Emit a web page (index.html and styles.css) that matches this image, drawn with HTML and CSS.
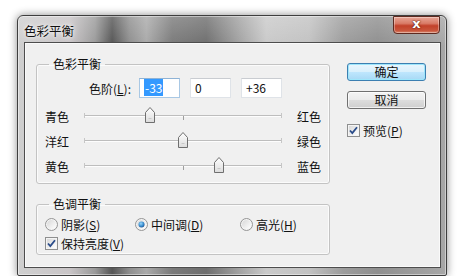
FILE: index.html
```html
<!DOCTYPE html>
<html lang="zh-CN">
<head>
<meta charset="UTF-8" />
<title>色彩平衡</title>
<link rel="stylesheet" href="styles.css">
</head>
<body>

<div class="window">
  <div class="titlebar">
    <span class="title">色彩平衡</span>
    <div class="close">x</div>
  </div>

  <div class="client">
    <div class="main">
      <fieldset class="group balance">
        <legend>色彩平衡</legend>

        <div class="level-row">
          <span class="level-label">色阶(<u>L</u>):</span>
          <div class="field focused"><span class="sel">-33</span></div>
          <div class="field">0</div>
          <div class="field">+36</div>
        </div>

        <div class="slider-row">
          <span class="side-label">青色</span>
          <div class="track">
            <span class="tick"></span>
            <svg class="thumb" style="left:33.5%" width="12" height="18" viewBox="0 0 12 18"><use href="#thumb"/></svg>
          </div>
          <span class="side-label right">红色</span>
        </div>
        <div class="slider-row">
          <span class="side-label">洋红</span>
          <div class="track">
            <span class="tick"></span>
            <svg class="thumb" style="left:50%" width="12" height="18" viewBox="0 0 12 18"><use href="#thumb"/></svg>
          </div>
          <span class="side-label right">绿色</span>
        </div>
        <div class="slider-row">
          <span class="side-label">黄色</span>
          <div class="track">
            <span class="tick"></span>
            <svg class="thumb" style="left:68%" width="12" height="18" viewBox="0 0 12 18"><use href="#thumb"/></svg>
          </div>
          <span class="side-label right">蓝色</span>
        </div>
      </fieldset>

      <fieldset class="group tone">
        <legend>色调平衡</legend>
        <div class="radio-row">
          <label class="opt shadows">
            <svg width="13" height="13" viewBox="0 0 13 13"><use href="#radio"/></svg>
            <span>阴影(<u>S</u>)</span>
          </label>
          <label class="opt midtones">
            <svg width="13" height="13" viewBox="0 0 13 13"><use href="#radio"/><circle cx="6.5" cy="6.5" r="3" fill="url(#dot)"/></svg>
            <span>中间调(<u>D</u>)</span>
          </label>
          <label class="opt">
            <svg width="13" height="13" viewBox="0 0 13 13"><use href="#radio"/></svg>
            <span>高光(<u>H</u>)</span>
          </label>
        </div>
        <label class="opt check-row">
          <svg width="13" height="13" viewBox="0 0 13 13"><use href="#check"/></svg>
          <span>保持亮度(<u>V</u>)</span>
        </label>
      </fieldset>
    </div>

    <div class="side">
      <div class="btn default">确定</div>
      <div class="btn">取消</div>
      <label class="opt preview">
        <svg width="13" height="13" viewBox="0 0 13 13"><use href="#check"/></svg>
        <span>预览(<u>P</u>)</span>
      </label>
    </div>
  </div>
</div>

<svg width="0" height="0" class="defs">
  <defs>
    <linearGradient id="thumbFill" x1="0" y1="0" x2="0" y2="1">
      <stop offset="0" stop-color="#ffffff"/>
      <stop offset="1" stop-color="#dcdcdc"/>
    </linearGradient>
    <linearGradient id="boxFill" x1="0" y1="0" x2="1" y2="1">
      <stop offset="0" stop-color="#d8d8d8"/>
      <stop offset="1" stop-color="#ffffff"/>
    </linearGradient>
    <radialGradient id="dot" cx="0.4" cy="0.35" r="0.7">
      <stop offset="0" stop-color="#9ad6fb"/>
      <stop offset="0.6" stop-color="#3a8fd0"/>
      <stop offset="1" stop-color="#1b4f8c"/>
    </radialGradient>
    <g id="thumb">
      <path d="M1.5 6.5 L6 1.5 L10.5 6.5 V16.5 H1.5 Z" fill="url(#thumbFill)" stroke="#6f6f6f"/>
      <path d="M4.5 12.5 H7.5" stroke="#c8c8c8"/>
    </g>
    <g id="radio">
      <circle cx="6.5" cy="6.5" r="6" fill="#f4f4f4" stroke="#949494"/>
      <circle cx="6.5" cy="6.5" r="4.5" fill="url(#boxFill)"/>
    </g>
    <g id="check">
      <rect x="0.5" y="0.5" width="12" height="12" fill="#f4f4f4" stroke="#8e8f8f"/>
      <rect x="2" y="2" width="9" height="9" fill="url(#boxFill)"/>
      <path d="M3 6.5 L5.3 9 L10 3.2" fill="none" stroke="#2a4c8a" stroke-width="1.8"/>
    </g>
  </defs>
</svg>

</body>
</html>
```

FILE: styles.css
```css
body {
  margin: 0;
  background: #fff;
  font-family: "Noto Sans CJK SC", "Liberation Sans", sans-serif;
  font-size: 12px;
  color: #111;
}

.defs {
  position: absolute;
}

/* Window frame */
.window {
  margin: 15px 0 0 17px;
  width: 430px;
  height: 261px;
  box-sizing: border-box;
  border: 1px solid #3e3e3e;
  border-radius: 6px 6px 2px 2px;
  padding: 0 6px 8px 7px;
  display: flex;
  flex-direction: column;
  background:
    linear-gradient(180deg, rgba(255,255,255,0.2), rgba(255,255,255,0) 30px),
    linear-gradient(90deg, #cfcfcf 0%, #c9c5c7 12%, #9a9a9a 18%, #555 22%, #8e8e8e 26%, #a9a9a9 30%, #7a7a7a 36%, #6e6e6e 44%, #a4a4a4 52%, #c9c9c9 58%, #c2c2c2 68%, #9c9c9c 76%, #8f8f8f 84%, #a7a7a7 100%);
  box-shadow: 0 0 8px rgba(0,0,0,0.45), inset 0 0 0 1px rgba(255,255,255,0.45);
}

.titlebar {
  height: 27px;
  display: flex;
  justify-content: space-between;
  align-items: flex-start;
}

.title {
  margin: 7px 0 0 -1px;
  font-size: 12.5px;
  line-height: 15px;
  color: #111;
  text-shadow: 0 0 6px rgba(255,255,255,0.9), 0 0 3px rgba(255,255,255,0.9);
}

.close {
  width: 47px;
  height: 18px;
  box-sizing: border-box;
  border: 1px solid #5e2a20;
  border-radius: 0 0 4px 4px;
  background: linear-gradient(180deg, #e8a697 0%, #d97b67 40%, #c2412a 55%, #c9563c 85%, #d98a70 100%);
  box-shadow: inset 0 0 0 1px rgba(255,255,255,0.35);
  color: #fff;
  font-family: "DejaVu Sans", sans-serif;
  font-weight: bold;
  font-size: 13px;
  line-height: 14px;
  text-align: center;
  text-shadow: 0 0 2px #5a1a10, 0 0 1px #5a1a10;
}

/* Client area */
.client {
  flex: 1;
  display: flex;
  gap: 17px;
  padding: 14px 0 0 11px;
  background: #f0f0f0;
  box-shadow: 0 0 0 1px #4d4d4d, inset 0 0 0 1px #fafafa;
}

.main {
  width: 294px;
}

.group {
  margin: 0;
  min-width: 0;
  border: 1px solid #c3c3c3;
  border-radius: 3px;
  padding: 7px 0 4px 8px;
  box-shadow: inset 0 0 0 1px #fbfbfb;
}

.group legend {
  margin-left: 4px;
  padding: 0 4px;
  line-height: 14px;
}

.level-row {
  display: flex;
  align-items: center;
  gap: 10px;
}

.level-label {
  width: 50px;
  margin-left: 36px;
  margin-right: -2px;
  text-align: right;
}

.field {
  width: 41px;
  height: 20px;
  box-sizing: border-box;
  background: #fff;
  border: 1px solid #dfe3e8;
  border-top-color: #c9ccd1;
  padding-left: 4px;
  line-height: 18px;
}

.field.focused {
  border-color: #a9c8e4;
  border-top-color: #8fb3d6;
}

.sel {
  background: #3399ff;
  color: #fff;
  padding: 0 1px;
}

.slider-row {
  display: flex;
  align-items: center;
  height: 25px;
}

.level-row + .slider-row {
  margin-top: 6px;
}

.side-label {
  width: 39px;
}

.side-label.right {
  width: auto;
  margin-left: 15px;
}

.track {
  position: relative;
  flex: none;
  width: 198px;
  height: 25px;
  background:
    linear-gradient(#bdbdbd, #bdbdbd) 0 11px / 100% 1px no-repeat,
    linear-gradient(#fdfdfd, #fdfdfd) 0 12px / 100% 1px no-repeat;
}

.track::before,
.track::after {
  content: "";
  position: absolute;
  top: 9px;
  width: 1px;
  height: 5px;
  background: #c6c6c6;
}
.track::before { left: 0; }
.track::after { right: 0; }

.tick {
  position: absolute;
  left: 50%;
  top: 12px;
  width: 1px;
  height: 4px;
  background: #9e9e9e;
}

.thumb {
  position: absolute;
  top: 2px;
  margin-left: -6px;
}

.tone {
  margin-top: 13px;
  padding: 4px 0 1px 8px;
}

.radio-row {
  display: flex;
  height: 19px;
  align-items: center;
}

.opt {
  display: flex;
  align-items: center;
  gap: 3px;
}

.opt.shadows { width: 90px; }
.opt.midtones { width: 105px; }

.check-row {
  height: 19px;
}

/* Right column */
.side {
  width: 79px;
  padding-top: 6px;
  display: flex;
  flex-direction: column;
}

.btn {
  height: 18px;
  box-sizing: border-box;
  border: 1px solid #707070;
  border-radius: 3px;
  background: linear-gradient(180deg, #f4f4f4 0%, #ebebeb 48%, #dddddd 52%, #cfcfcf 100%);
  box-shadow: inset 0 0 0 1px rgba(255,255,255,0.7);
  text-align: center;
  line-height: 16px;
  margin-bottom: 10px;
}

.btn.default {
  border-color: #3c7fb1;
  background: linear-gradient(180deg, #eaf6fd 0%, #d9f0fc 48%, #bee6fd 52%, #a7d9f5 100%);
  box-shadow: inset 0 0 0 1px #9ee6fb;
}

.preview {
  margin-top: 3px;
}
```
